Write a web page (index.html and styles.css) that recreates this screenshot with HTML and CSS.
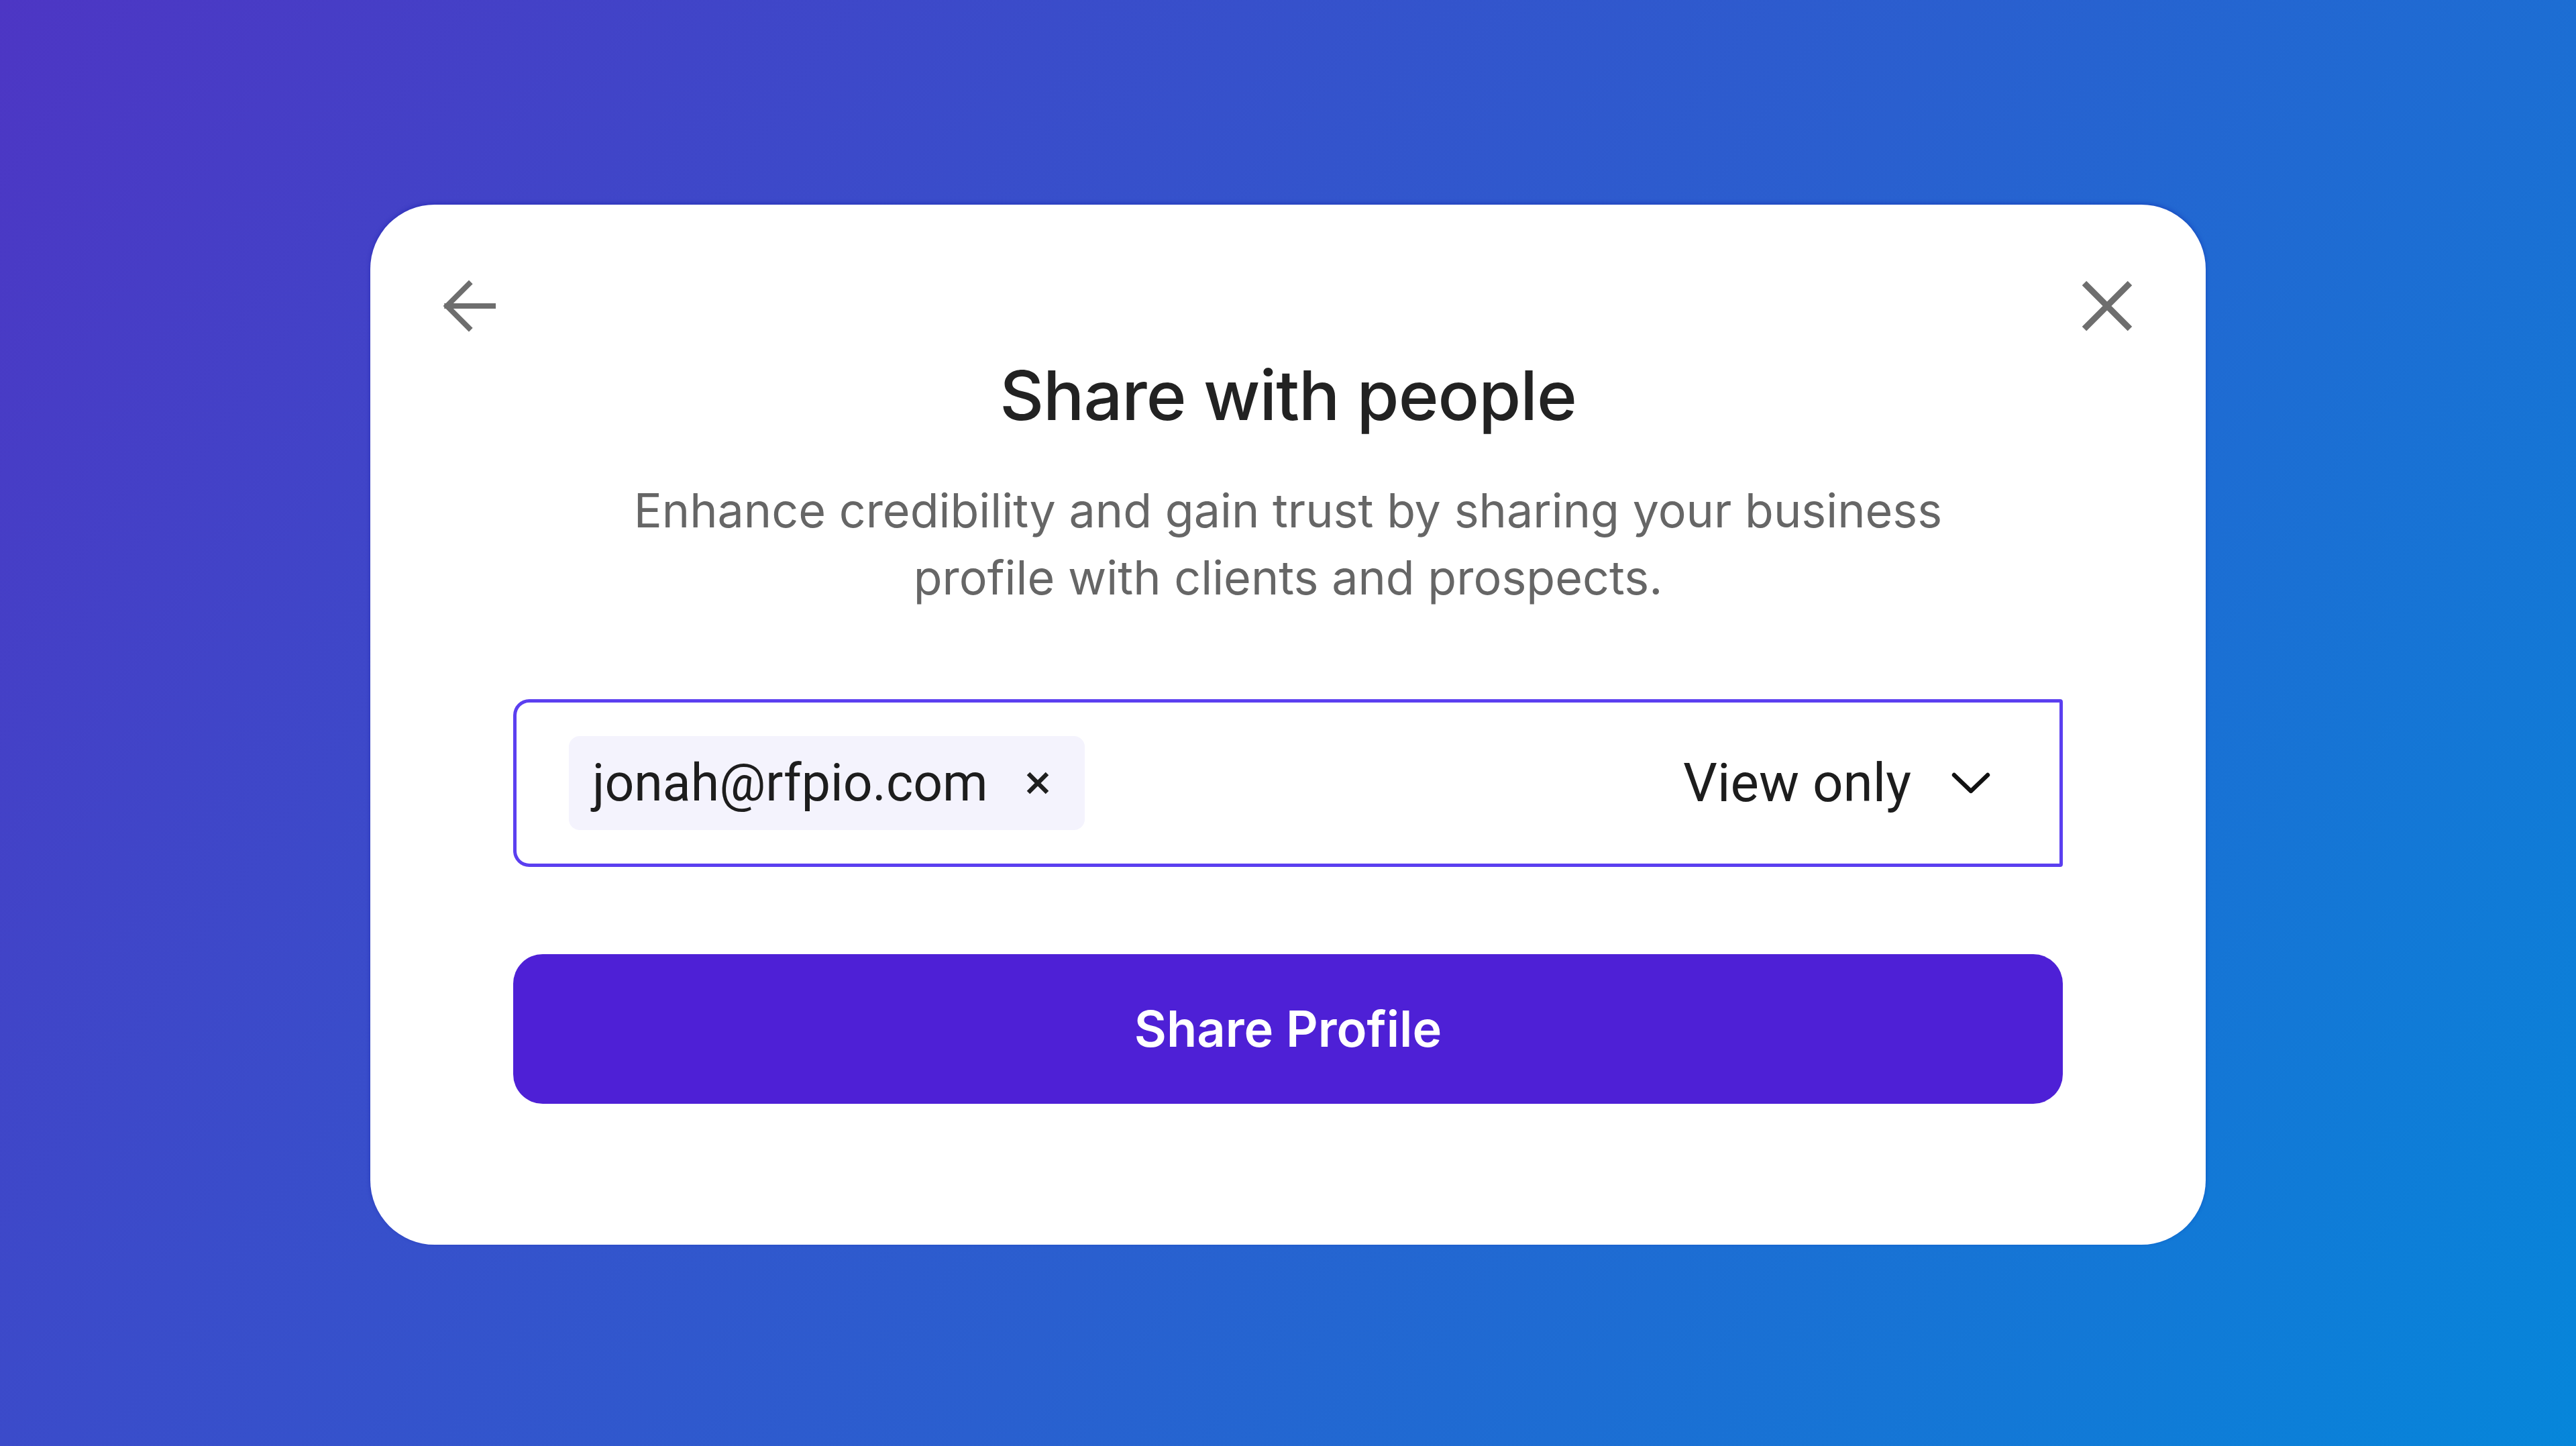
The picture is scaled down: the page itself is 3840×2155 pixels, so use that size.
FILE: index.html
```html
<!DOCTYPE html>
<html lang="en">
<head>
    <meta charset="UTF-8">
    <meta name="viewport" content="width=device-width, initial-scale=1.0">
    <title>Share with people</title>
    <link rel="stylesheet" href="styles.css">
</head>
<body>
    <div class="dialog">
        <div class="dialog-header">
            <button class="icon-btn" aria-label="Back">
                <svg width="88" height="88" viewBox="0 0 22 22" fill="none" stroke="#6e6e6e" stroke-width="2.2" stroke-linecap="square">
                    <path d="M21 11H2M11 2l-9 9 9 9"/>
                </svg>
            </button>
            <button class="icon-btn" aria-label="Close">
                <svg width="80" height="80" viewBox="0 0 20 20" fill="none" stroke="#6e6e6e" stroke-width="2.3">
                    <path d="M1.5 1.5l17 17M18.5 1.5l-17 17"/>
                </svg>
            </button>
        </div>

        <div class="dialog-body">
            <h1>Share with people</h1>
            <p class="subtitle">Enhance credibility and gain trust by sharing your business<br>profile with clients and prospects.</p>

            <!-- Recipients field -->
            <div class="recipients">
                <span class="chip">
                    jonah@rfpio.com
                    <svg class="chip-remove" width="40" height="40" viewBox="0 0 10 10" fill="none" stroke="#1f1f1f" stroke-width="1.6">
                        <path d="M1.5 1.5l7 7M8.5 1.5l-7 7"/>
                    </svg>
                </span>
                <div class="permission">
                    View only
                    <svg width="58" height="32" viewBox="0 0 29 16" fill="none" stroke="#111" stroke-width="3.2" stroke-linecap="round" stroke-linejoin="round">
                        <path d="M2 2l12.5 12L27 2"/>
                    </svg>
                </div>
            </div>

            <button class="share-btn">Share Profile</button>
        </div>
    </div>
</body>
</html>
```

FILE: styles.css
```css
html, body {
    height: 100%;
}

body {
    margin: 0;
    font-family: Inter, "Noto Sans", sans-serif;
    background: linear-gradient(125deg, #4d36c4 0%, #2a5fcf 55%, #0686da 100%);
    display: flex;
    align-items: center;
    justify-content: center;
}

.dialog {
    width: 2736px;
    height: 1550px;
    box-sizing: border-box;
    background-color: #fff;
    border-radius: 96px;
    padding: 111px 107px 0;
    margin-top: 4px;
    box-shadow: 0 -2px 6px rgba(10, 20, 160, 0.35);
}

.dialog-header {
    display: flex;
    justify-content: space-between;
    align-items: center;
    height: 80px;
}

.icon-btn {
    background: none;
    border: none;
    padding: 0;
    width: 80px;
    height: 80px;
    display: flex;
    align-items: center;
    justify-content: center;
    cursor: pointer;
}

.dialog-body {
    padding: 0 106px;
    text-align: center;
}

h1 {
    margin: 36px 0 0;
    font-size: 102px;
    line-height: 115px;
    font-weight: 500;
    color: #222;
    letter-spacing: -1px;
}

.subtitle {
    margin: 64px 0 0;
    font-size: 70px;
    line-height: 100px;
    color: #666;
}

.recipients {
    margin-top: 131px;
    height: 250px;
    box-sizing: border-box;
    border: 5px solid #5b3ff0;
    border-radius: 24px 4px 4px 24px;
    display: flex;
    align-items: center;
    padding: 0 103px 0 78px;
    font-family: Roboto, "Liberation Sans", sans-serif;
    font-size: 77px;
    color: #1d1d1d;
}

.chip {
    display: flex;
    align-items: center;
    height: 140px;
    padding: 0 50px 0 35px;
    background-color: #f4f3fd;
    border-radius: 16px;
}

.chip-remove {
    margin-left: 54px;
}

.permission {
    margin-left: auto;
    display: flex;
    align-items: center;
    gap: 60px;
    font-size: 80px;
}

.share-btn {
    display: block;
    width: 100%;
    height: 223px;
    margin-top: 130px;
    border: none;
    border-radius: 44px;
    background-color: #4e20d6;
    color: #fff;
    font-family: Inter, "Noto Sans", sans-serif;
    font-size: 74px;
    font-weight: 600;
    cursor: pointer;
}
```
